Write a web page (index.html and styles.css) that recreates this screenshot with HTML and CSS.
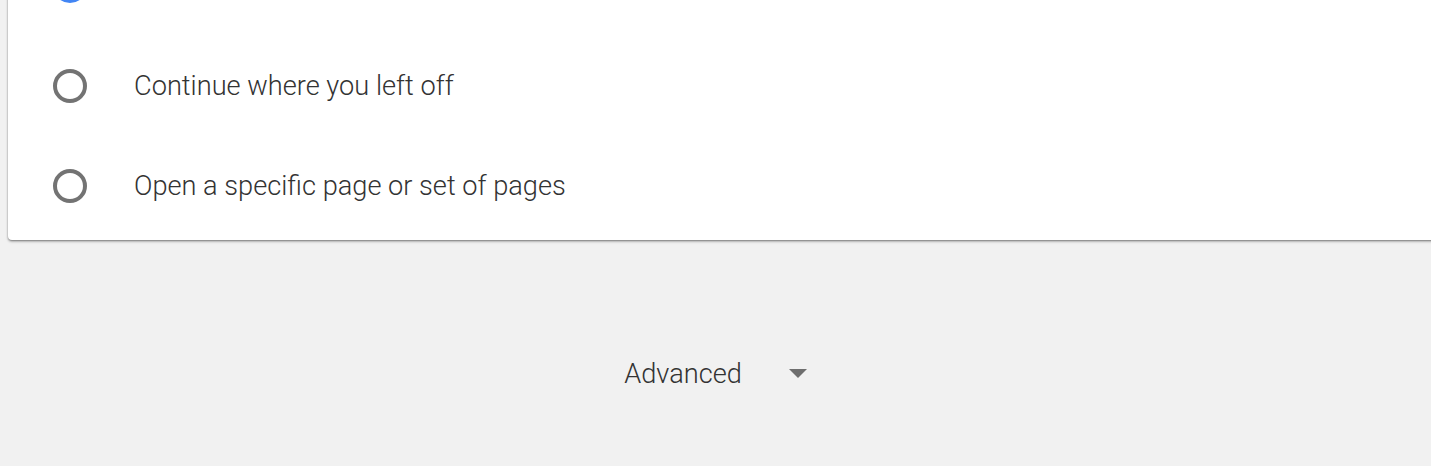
FILE: index.html
```html
<!DOCTYPE html>
<html lang="en">
<head>
    <meta charset="UTF-8">
    <title>On startup</title>
    <link rel="stylesheet" href="styles.css">
</head>
<body>
    <div class="card">
        <div class="row">
            <span class="radio checked"></span>
        </div>
        <label class="row">
            <span class="radio"></span>
            <span class="label">Continue where you left off</span>
        </label>
        <label class="row">
            <span class="radio"></span>
            <span class="label">Open a specific page or set of pages</span>
        </label>
    </div>

    <div class="advanced">
        <span>Advanced</span>
        <svg class="arrow" width="18" height="9" viewBox="0 0 18 9"><path d="M0 0h18L9 9z" fill="#6e6e6e"/></svg>
    </div>
</body>
</html>
```

FILE: styles.css
```css
/* Page */
body {
    margin: 0;
    padding: 0;
    background-color: #f1f1f1;
    font-family: 'Roboto', 'Liberation Sans', sans-serif;
    font-weight: 300;
    color: #333333;
    overflow: hidden;
}

/* Card with the startup options */
.card {
    margin: -64px -20px 0 8px;
    padding-bottom: 4px;
    background-color: #ffffff;
    border-radius: 4px;
    box-shadow: 0 1px 2px rgba(0, 0, 0, 0.4), 0 2px 3px rgba(0, 0, 0, 0.15);
}

.row {
    display: flex;
    align-items: center;
    height: 100px;
    padding-left: 45px;
}

.radio {
    width: 26px;
    height: 26px;
    border: 4px solid #737373;
    border-radius: 50%;
    flex-shrink: 0;
}

.radio.checked {
    border-color: #4285f4;
}

.label {
    margin-left: 47px;
    font-size: 27.2px;
}

/* Advanced toggle */
.advanced {
    display: flex;
    justify-content: center;
    align-items: center;
    gap: 46px;
    margin-top: 118px;
    font-size: 27.2px;
}

.arrow {
    margin-top: -2px;
    margin-left: 1px;
}
```
